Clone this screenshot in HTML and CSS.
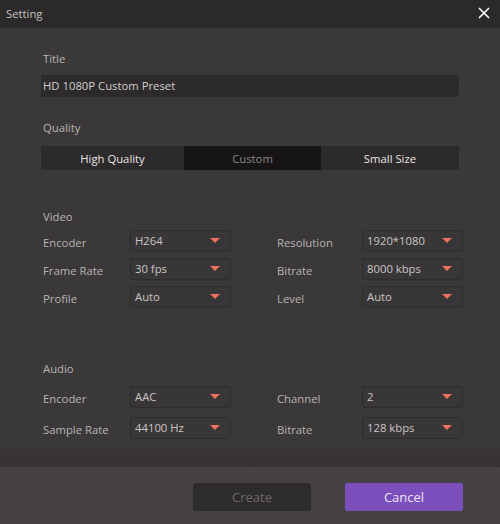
FILE: index.html
```html
<!DOCTYPE html>
<html>
<head>
<meta charset="utf-8">
<link rel="stylesheet" href="styles.css">
</head>
<body>
<div class="dialog">
  <div class="titlebar">
    <span class="title">Setting</span>
    <span class="close"><svg width="12" height="12" viewBox="0 0 12 12"><path d="M1 1L11 11M11 1L1 11" stroke="#ffffff" stroke-width="1.6" fill="none"/></svg></span>
  </div>
  <div class="main">
    <section class="sec sec-title">
      <div class="label">Title</div>
      <div class="input">HD 1080P Custom Preset</div>
    </section>
    <section class="sec sec-quality">
      <div class="label">Quality</div>
      <div class="seg">
        <div class="seg-item seg-hq">High Quality</div>
        <div class="seg-item seg-custom">Custom</div>
        <div class="seg-item seg-small">Small Size</div>
      </div>
    </section>
    <section class="sec sec-video">
      <div class="label">Video</div>
      <div class="grid">
        <div class="flabel">Encoder</div>
        <div class="select"><span>H264</span><i class="arrow"></i></div>
        <div class="flabel right">Resolution</div>
        <div class="select"><span>1920*1080</span><i class="arrow"></i></div>
        <div class="flabel">Frame Rate</div>
        <div class="select"><span>30 fps</span><i class="arrow"></i></div>
        <div class="flabel right">Bitrate</div>
        <div class="select"><span>8000 kbps</span><i class="arrow"></i></div>
        <div class="flabel">Profile</div>
        <div class="select"><span>Auto</span><i class="arrow"></i></div>
        <div class="flabel right">Level</div>
        <div class="select"><span>Auto</span><i class="arrow"></i></div>
      </div>
    </section>
    <section class="sec sec-audio">
      <div class="label">Audio</div>
      <div class="grid grid-audio">
        <div class="flabel">Encoder</div>
        <div class="select"><span>AAC</span><i class="arrow"></i></div>
        <div class="flabel right">Channel</div>
        <div class="select"><span>2</span><i class="arrow"></i></div>
        <div class="flabel">Sample Rate</div>
        <div class="select"><span>44100 Hz</span><i class="arrow"></i></div>
        <div class="flabel right">Bitrate</div>
        <div class="select"><span>128 kbps</span><i class="arrow"></i></div>
      </div>
    </section>
  </div>
  <div class="footer">
    <div class="btn btn-create">Create</div>
    <div class="btn btn-cancel">Cancel</div>
  </div>
</div>
</body>
</html>
```
FILE: styles.css
```css
* { box-sizing: border-box; }
html, body { margin: 0; padding: 0; }
body {
  width: 500px;
  height: 524px;
  background: #3b3839;
  font-family: "Open Sans", "Noto Sans", sans-serif;
  font-size: 11.3px;
  color: #b8b4b4;
  overflow: hidden;
}
.dialog {
  display: flex;
  flex-direction: column;
  height: 524px;
}
.titlebar {
  height: 28px;
  background: #2c292a;
  display: flex;
  align-items: center;
  justify-content: space-between;
  padding: 0 10px 2px 6px;
  color: #c4c0c0;
}
.close { display: flex; width: 12px; height: 12px; margin-top: -1px; }
.main {
  flex: 1;
  display: flex;
  flex-direction: column;
  background: linear-gradient(to bottom, #3b3839 0, #3b3839 calc(100% - 22px), #363233 100%);
}
.sec {
  padding-left: 41px;
  padding-right: 41px;
}
.sec + .sec { border-top: 1px solid #383536; }
.label {
  height: 16px;
  line-height: 16px;
  padding-left: 2px;
  color: #b8b4b4;
}
.sec-title { padding-top: 23px; height: 79px; }
.sec-title .label { margin-bottom: 8px; }
.input {
  height: 22px;
  line-height: 22px;
  background: #2d2a2b;
  border-radius: 2px;
  padding-left: 2px;
  color: #d2cece;
}
.sec-quality { padding-top: 12px; height: 74px; }
.sec-quality .label { margin-bottom: 10px; }
.seg {
  display: grid;
  grid-template-columns: 143px 137px 138px;
  height: 24px;
  background: #2d2a2b;
  border-radius: 2px;
  overflow: hidden;
}
.seg-item {
  display: flex;
  align-items: center;
  justify-content: center;
  color: #eae6e6;
}
.seg-custom { background: #161415; color: #8a8687; }
.sec-video { padding-top: 27px; height: 154px; padding-right: 37px; }
.sec-video .label { margin-bottom: 5px; }
.grid {
  display: grid;
  grid-template-columns: 89px 101px 131px 101px;
  grid-auto-rows: 22px;
  row-gap: 6px;
}
.flabel {
  padding-left: 2px;
  padding-top: 3px;
  line-height: 20px;
  color: #b8b4b4;
}
.flabel.right { padding-left: 46px; }
.select {
  position: relative;
  display: flex;
  align-items: center;
  justify-content: space-between;
  padding: 0 10px 1px 4px;
  border: 1px solid #2f2c2d;
  border-radius: 3px;
  background: #393637;
  color: #cac6c6;
}
.arrow {
  width: 0;
  height: 0;
  border-left: 5px solid transparent;
  border-right: 5px solid transparent;
  border-top: 5px solid #f0705d;
}
.sec-audio { padding-top: 25px; flex: 1; padding-right: 37px; }
.sec-audio .label { margin-bottom: 9px; }
.grid-audio { row-gap: 9px; }
.footer {
  height: 57px;
  background: #454142;
  display: flex;
  justify-content: flex-end;
  align-items: flex-start;
  gap: 34px;
  padding: 16px 37px 0 0;
}
.btn {
  width: 118px;
  height: 28px;
  border-radius: 2px;
  display: flex;
  align-items: center;
  justify-content: center;
  font-size: 13px;
}
.btn-create { background: #2e2b2c; color: #6c6869; }
.btn-cancel { background: #7b4fbc; color: #ece6f2; }
```
